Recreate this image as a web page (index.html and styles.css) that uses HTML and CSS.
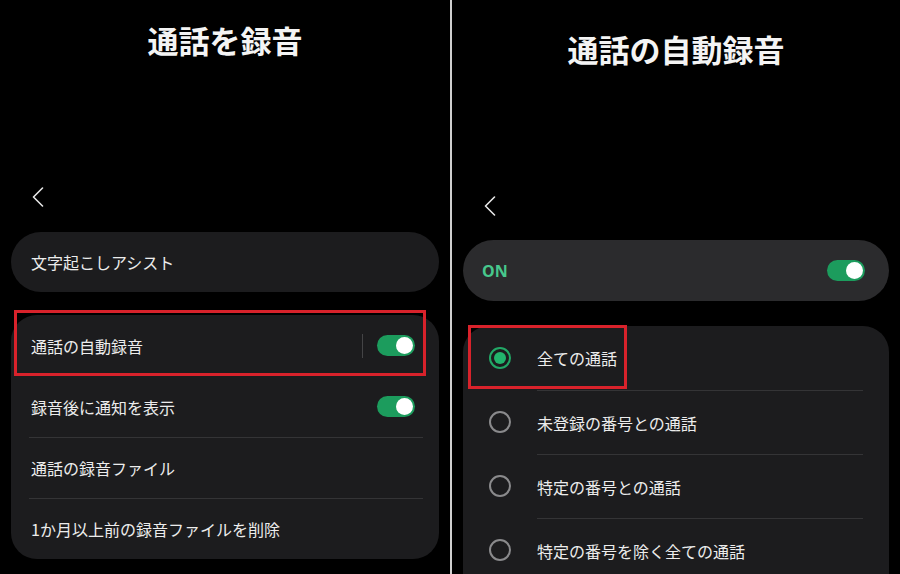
FILE: index.html
```html
<!DOCTYPE html>
<html lang="ja">

<head>
    <meta charset="UTF-8">
    <meta name="viewport" content="width=device-width, initial-scale=1.0">
    <title>通話を録音</title>
    <link rel="stylesheet" href="styles.css">
</head>

<body>
    <div class="screen left">
        <div class="header">
            <h1 class="title">通話を録音</h1>
            <div class="back">
                <svg width="12" height="20" viewBox="0 0 12 20"><polyline points="10.5,1 1.5,10 10.5,19" fill="none" stroke="#e6e6e6" stroke-width="1.6" stroke-linecap="round" stroke-linejoin="round"/></svg>
            </div>
        </div>

        <div class="card single">
            <span class="label">文字起こしアシスト</span>
        </div>

        <div class="card group">
            <div class="mark mark-left"></div>
            <div class="row">
                <span class="label">通話の自動録音</span>
                <span class="vline"></span>
                <span class="toggle"><span class="knob"></span></span>
            </div>
            <div class="row">
                <span class="label">録音後に通知を表示</span>
                <span class="toggle"><span class="knob"></span></span>
            </div>
            <div class="row divided">
                <span class="label">通話の録音ファイル</span>
            </div>
            <div class="row divided">
                <span class="label">1か月以上前の録音ファイルを削除</span>
            </div>
        </div>
    </div>

    <div class="divider"></div>

    <div class="screen right">
        <div class="header">
            <h1 class="title">通話の自動録音</h1>
            <div class="back">
                <svg width="12" height="20" viewBox="0 0 12 20"><polyline points="10.5,1 1.5,10 10.5,19" fill="none" stroke="#e6e6e6" stroke-width="1.6" stroke-linecap="round" stroke-linejoin="round"/></svg>
            </div>
        </div>

        <div class="card master">
            <span class="on">ON</span>
            <span class="toggle"><span class="knob"></span></span>
        </div>

        <div class="card options">
            <div class="mark mark-right"></div>
            <div class="option">
                <span class="radio checked"></span>
                <span class="option-label">全ての通話</span>
            </div>
            <div class="option">
                <span class="radio"></span>
                <span class="option-label divided">未登録の番号との通話</span>
            </div>
            <div class="option">
                <span class="radio"></span>
                <span class="option-label divided">特定の番号との通話</span>
            </div>
            <div class="option">
                <span class="radio"></span>
                <span class="option-label divided">特定の番号を除く全ての通話</span>
            </div>
        </div>
    </div>
</body>

</html>
```

FILE: styles.css
```css
* {
    margin: 0;
    padding: 0;
    box-sizing: border-box;
}

body {
    width: 900px;
    height: 574px;
    background: #000;
    overflow: hidden;
    display: flex;
    font-family: 'Noto Sans CJK JP', 'Noto Sans', sans-serif;
    color: #ececec;
}

.screen {
    display: flex;
    flex-direction: column;
    padding: 0 11px;
    overflow: hidden;
}

.screen > * {
    flex-shrink: 0;
}

.left {
    width: 450px;
}

.right {
    width: 448px;
}

.divider {
    width: 2px;
    background: #cfcfcf;
}

.header {
    display: flex;
    flex-direction: column;
}

.left .header {
    height: 232px;
}

.right .header {
    height: 240px;
}

.title {
    font-size: 31px;
    font-weight: bold;
    line-height: 40px;
    text-align: center;
    color: #f4f4f4;
}

.left .title {
    margin-top: 20px;
}

.right .title {
    margin-top: 29px;
}

.back {
    margin-top: auto;
    margin-left: 21px;
    height: 20px;
}

.left .back {
    margin-bottom: 25px;
}

.right .back {
    margin-bottom: 24px;
}

.back svg {
    display: block;
}

.card {
    background: #1c1c1e;
    position: relative;
}

.label {
    font-size: 16px;
    flex: 1;
}

.single {
    height: 60px;
    border-radius: 30px;
    display: flex;
    align-items: center;
    padding-left: 20px;
}

.group {
    margin-top: 23px;
    border-radius: 26px;
}

.row {
    height: 61px;
    display: flex;
    align-items: center;
    margin: 0 16px 0 18px;
    padding: 0 8px 0 2px;
}

.row.divided {
    border-top: 1px solid #343436;
}

.vline {
    width: 1px;
    height: 24px;
    background: #444446;
    margin-right: 14px;
}

.toggle {
    width: 38px;
    height: 21px;
    border-radius: 11px;
    background: #1c9c5d;
    display: flex;
    justify-content: flex-end;
    align-items: center;
    padding: 0 2px;
}

.knob {
    width: 17px;
    height: 17px;
    border-radius: 50%;
    background: #fff;
}

.master {
    height: 61px;
    border-radius: 31px;
    background: #2b2b2d;
    display: flex;
    align-items: center;
    justify-content: space-between;
    padding: 0 24px 0 19px;
}

.on {
    font-size: 16px;
    font-weight: bold;
    color: #47c88c;
    font-family: 'Noto Sans', sans-serif;
}

.options {
    margin-top: 25px;
    border-radius: 26px 26px 0 0;
}

.option {
    display: flex;
    align-items: center;
    padding-left: 26px;
}

.radio {
    width: 22px;
    height: 22px;
    border-radius: 50%;
    border: 2px solid #8a8a8c;
    margin-right: 26px;
    display: flex;
    align-items: center;
    justify-content: center;
    flex-shrink: 0;
}

.radio.checked {
    border-color: #22a866;
}

.radio.checked::after {
    content: '';
    width: 12px;
    height: 12px;
    border-radius: 50%;
    background: #22b46c;
}

.option-label {
    flex: 1;
    height: 64px;
    margin-right: 26px;
    font-size: 16px;
    display: flex;
    align-items: center;
}

.option-label.divided {
    border-top: 1px solid #343436;
}

.mark {
    position: absolute;
    border: 3px solid #d8222b;
    pointer-events: none;
}

.mark-left {
    top: -5px;
    left: 3px;
    width: 412px;
    height: 66px;
}

.mark-right {
    top: -1px;
    left: 5px;
    width: 159px;
    height: 64px;
}
```
